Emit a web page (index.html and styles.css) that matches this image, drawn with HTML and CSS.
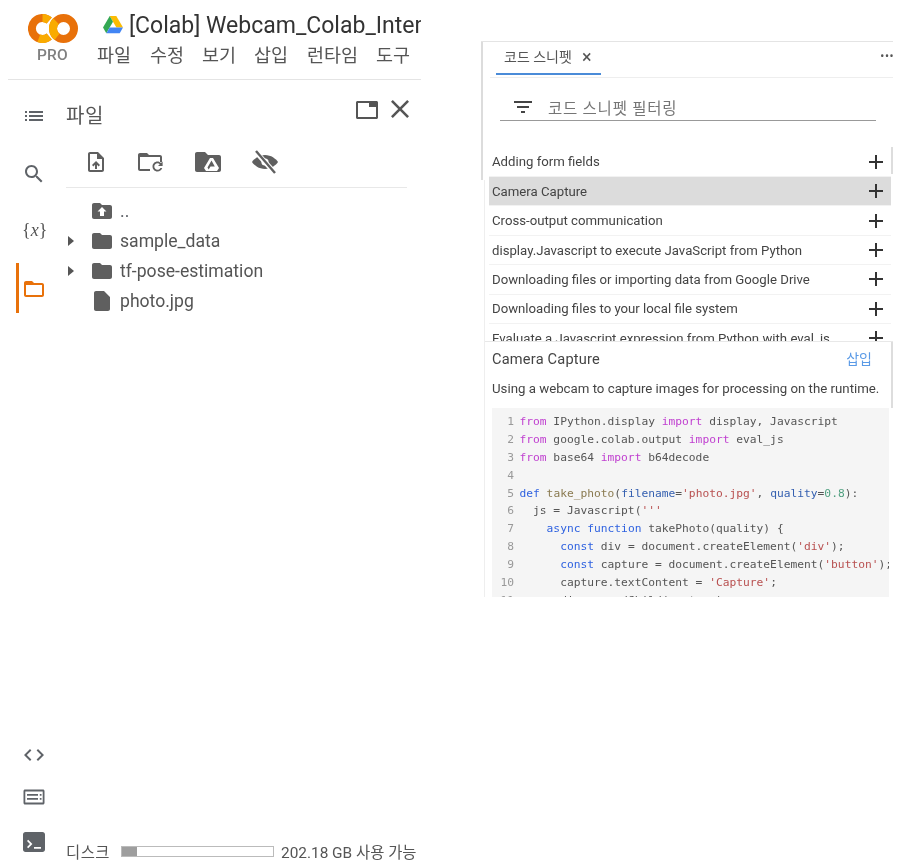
FILE: index.html
```html
<!DOCTYPE html>
<html lang="ko">
<head>
<meta charset="utf-8">
<title>Colab</title>
<link rel="stylesheet" href="styles.css">
</head>
<body>
<div class="canvas">
  <section class="left">
    <header class="header">
      <div class="logo">
        <svg class="logo-mark" viewBox="0 0 50 29" width="50" height="29">
          <g fill="none" stroke-width="8">
            <path d="M21.200 6.500A10.500 10.500 0 1 0 21.200 22.500" stroke="#e8710a"/>
            <path d="M10.800 24.300A10.500 10.500 0 0 0 21.200 22.500M14.500 4A10.500 10.500 0 0 1 21.200 6.500" stroke="#f9ab00"/>
            <circle cx="35.500" cy="14.500" r="10.500" stroke="#e8710a"/>
            <path d="M29 22.800A10.500 10.500 0 0 1 28 7.100" stroke="#f9ab00"/>
          </g>
        </svg>
        <span class="pro">PRO</span>
      </div>
      <div class="head-main">
        <div class="title-row">
          <svg class="drive" viewBox="0 0 20 18" width="20" height="18">
            <path d="M6.700 0h6.600l6.700 11.500h-6.600z" fill="#fbbc04"/>
            <path d="M6.700 0L0 11.500l3.300 5.700L10 5.700z" fill="#34a853"/>
            <path d="M3.300 17.200h13.400l3.300-5.700H6.700z" fill="#4285f4"/>
          </svg>
          <span class="title">[Colab] Webcam_Colab_Inter</span>
        </div>
        <nav class="menu">
          <span>파일</span><span>수정</span><span>보기</span><span>삽입</span><span>런타임</span><span>도구</span>
        </nav>
      </div>
    </header>
    <div class="workspace">
      <aside class="rail">
        <div class="rail-item"><svg viewBox="0 0 24 24" class="icon"><path d="M3 13h2v-2H3v2zm0 4h2v-2H3v2zm0-8h2V7H3v2zm4 4h14v-2H7v2zm0 4h14v-2H7v2zM7 7v2h14V7H7z"/></svg></div>
        <div class="rail-item"><svg viewBox="0 0 24 24" class="icon"><path d="M15.500 14h-.79l-.28-.27C15.410 12.590 16 11.110 16 9.500 16 5.910 13.090 3 9.500 3S3 5.910 3 9.500 5.910 16 9.500 16c1.610 0 3.090-.59 4.230-1.570l.27.28v.79l5 4.990L20.490 19l-4.990-5zm-6 0C7.010 14 5 11.990 5 9.500S7.010 5 9.500 5 14 7.010 14 9.500 11.990 14 9.500 14z"/></svg></div>
        <div class="rail-item vars"><span class="var-glyph">{<i>x</i>}</span></div>
        <div class="rail-item active"><svg viewBox="0 0 24 24" class="icon orange"><path d="M20 6h-8l-2-2H4c-1.100 0-1.990.9-1.990 2L2 18c0 1.100.9 2 2 2h16c1.100 0 2-.9 2-2V8c0-1.100-.9-2-2-2zm0 12H4V8h16v10z"/></svg></div>
        <div class="rail-bottom">
          <svg viewBox="0 0 24 24" class="icon"><path d="M9.400 16.600L4.800 12l4.600-4.600L8 6l-6 6 6 6 1.400-1.400zm5.200 0l4.600-4.600-4.600-4.600L16 6l6 6-6 6-1.400-1.400z"/></svg>
          <svg viewBox="0 0 24 24" class="icon"><path fill-rule="evenodd" d="M3 4.500h18c.8 0 1.500.7 1.500 1.500v12c0 .8-.7 1.500-1.500 1.500H3c-.8 0-1.500-.7-1.500-1.500V6c0-.8.7-1.500 1.500-1.500zm.3 2v11h17.400v-11H3.300zM5 9h11v1.700H5V9zm12.800 0h1.700v1.700h-1.700V9zM5 13h11v1.700H5V13zm12.800 0h1.700v1.700h-1.700V13z"/></svg>
          <svg viewBox="0 0 24 24" class="icon term"><path fill-rule="evenodd" d="M3.500 2h17C21.900 2 23 3.100 23 4.500v15c0 1.400-1.100 2.500-2.500 2.500h-17C2.100 22 1 20.900 1 19.500v-15C1 3.100 2.100 2 3.500 2zM5 11l1.200-1.200L10.400 14l-4.200 4.200L5 17l3-3-3-3zm7 6h7v1.700h-7V17z"/></svg>
        </div>
      </aside>
      <main class="panel">
        <div class="panel-head">
          <span class="panel-title">파일</span>
          <div class="panel-actions">
            <svg class="win" viewBox="0 0 24 20" width="24" height="20"><path d="M2.500 1h19c.8 0 1.500.7 1.500 1.500v15c0 .8-.7 1.500-1.500 1.500h-19c-.8 0-1.500-.7-1.500-1.500v-15C1 1.700 1.700 1 2.500 1zM3 3v14h18V7h-7V3H3z"/></svg>
            <svg class="close" viewBox="5 5 14 14" width="18" height="18"><path d="M19 6.410L17.590 5 12 10.590 6.410 5 5 6.410 10.590 12 5 17.590 6.410 19 12 13.410 17.590 19 19 17.590 13.410 12z"/></svg>
          </div>
        </div>
        <div class="toolbar">
          <svg viewBox="0 0 24 24" class="tool"><path d="M14 2H6c-1.100 0-1.990.9-1.990 2L4 20c0 1.100.89 2 1.990 2H18c1.100 0 2-.9 2-2V8l-6-6zm4 18H6V4h7v5h5v11zM8 15.010l1.410 1.410L11 14.840V19h2v-4.160l1.590 1.590L16 15.010 12.010 11 8 15.010z"/></svg>
          <svg viewBox="0 0 28 24" class="tool wide"><path d="M3 3h7l2 2h11c1.100 0 2 .9 2 2v5h-2V7H3v12h10v2H3c-1.100 0-2-.9-2-2V5c0-1.100.9-2 2-2z"/><path d="M20.500 11.500c1.400 0 2.600.6 3.500 1.500l1.600-1.600V16h-4.600l1.800-1.800c-.6-.6-1.400-1-2.300-1-1.800 0-3.200 1.400-3.200 3.300s1.400 3.300 3.200 3.300c1.300 0 2.400-.8 2.900-1.900h1.800c-.6 2.100-2.500 3.600-4.700 3.600-2.800 0-5-2.200-5-5s2.200-5 5-5z"/></svg>
          <svg viewBox="0 0 28 24" class="tool wide"><path fill-rule="evenodd" d="M3 2h8l3 3h11c1.100 0 2 .9 2 2v13c0 1.100-.9 2-2 2H3c-1.100 0-2-.9-2-2V4c0-1.100.9-2 2-2zm13 6l-6 10 2 3h11l2-3-6-10h-3zm1.500 2.500l3.300 6h-4.300l-1.800 3-1.200-2 4-7z"/></svg>
          <svg viewBox="0 0 28 24" class="tool wide"><path d="M14 5c-6 0-11 3.800-13 7 2 3.200 7 7 13 7s11-3.800 13-7c-2-3.200-7-7-13-7z"/><circle cx="14" cy="12" r="3.600" fill="#fff"/><path d="M4.500 1.500L23.500 22.500" stroke="#fff" stroke-width="5"/><path d="M5 1L24 23" stroke="#5f5f5f" stroke-width="2.400"/></svg>
        </div>
        <div class="tree">
          <div class="tree-row"><span class="caret"></span><svg viewBox="0 0 24 24" class="node"><path fill-rule="evenodd" d="M10 4H4c-1.100 0-1.990.9-1.990 2L2 18c0 1.100.9 2 2 2h16c1.100 0 2-.9 2-2V8c0-1.100-.9-2-2-2h-8l-2-2zm2 4l4.500 4.500H14V17h-4v-4.500H7.500L12 8z"/></svg><span class="dots">..</span></div>
          <div class="tree-row"><span class="caret on"></span><svg viewBox="0 0 24 24" class="node"><path d="M10 4H4c-1.100 0-1.990.9-1.990 2L2 18c0 1.100.9 2 2 2h16c1.100 0 2-.9 2-2V8c0-1.100-.9-2-2-2h-8l-2-2z"/></svg><span>sample_data</span></div>
          <div class="tree-row"><span class="caret on"></span><svg viewBox="0 0 24 24" class="node"><path d="M10 4H4c-1.100 0-1.990.9-1.990 2L2 18c0 1.100.9 2 2 2h16c1.100 0 2-.9 2-2V8c0-1.100-.9-2-2-2h-8l-2-2z"/></svg><span>tf-pose-estimation</span></div>
          <div class="tree-row"><span class="caret"></span><svg viewBox="0 0 24 24" class="node"><path d="M6 2c-1.100 0-1.990.9-1.990 2L4 20c0 1.100.89 2 1.990 2H18c1.100 0 2-.9 2-2V8l-6-6H6z"/></svg><span>photo.jpg</span></div>
        </div>
        <div class="disk">
          <span class="disk-label">디스크</span>
          <div class="disk-bar"><div class="disk-fill"></div></div>
          <span class="disk-text">202.18 GB 사용 가능</span>
        </div>
      </main>
    </div>
  </section>

  <section class="right">
    <div class="tabs">
      <div class="tab"><span>코드 스니펫</span><span class="tab-x">×</span></div>
      <span class="more">•••</span>
    </div>
    <div class="filter">
      <svg viewBox="3 6 18 12" width="18" height="12" class="filter-icon"><path d="M10 18h4v-2h-4v2zM3 6v2h18V6H3zm3 7h12v-2H6v2z"/></svg>
      <span>코드 스니펫 필터링</span>
    </div>
    <div class="list-wrap">
      <ul class="list">
        <li><span>Adding form fields</span><svg viewBox="5 5 14 14" class="plus"><path d="M19 13h-6v6h-2v-6H5v-2h6V5h2v6h6v2z"/></svg></li>
        <li class="sel"><span>Camera Capture</span><svg viewBox="5 5 14 14" class="plus"><path d="M19 13h-6v6h-2v-6H5v-2h6V5h2v6h6v2z"/></svg></li>
        <li><span>Cross-output communication</span><svg viewBox="5 5 14 14" class="plus"><path d="M19 13h-6v6h-2v-6H5v-2h6V5h2v6h6v2z"/></svg></li>
        <li><span>display.Javascript to execute JavaScript from Python</span><svg viewBox="5 5 14 14" class="plus"><path d="M19 13h-6v6h-2v-6H5v-2h6V5h2v6h6v2z"/></svg></li>
        <li><span>Downloading files or importing data from Google Drive</span><svg viewBox="5 5 14 14" class="plus"><path d="M19 13h-6v6h-2v-6H5v-2h6V5h2v6h6v2z"/></svg></li>
        <li><span>Downloading files to your local file system</span><svg viewBox="5 5 14 14" class="plus"><path d="M19 13h-6v6h-2v-6H5v-2h6V5h2v6h6v2z"/></svg></li>
        <li><span>Evaluate a Javascript expression from Python with eval_js</span><svg viewBox="5 5 14 14" class="plus"><path d="M19 13h-6v6h-2v-6H5v-2h6V5h2v6h6v2z"/></svg></li>
      </ul>
      <div class="scroll-thumb"></div>
    </div>
    <div class="detail">
      <div class="detail-top">
        <div class="detail-head"><span class="detail-title">Camera Capture</span><span class="insert">삽입</span></div>
        <p class="detail-desc">Using a webcam to capture images for processing on the runtime.</p>
      </div>
      <div class="code">
<div class="ln"><b>1</b><code><span class="k">from</span> IPython.display <span class="k">import</span> display, Javascript</code></div>
<div class="ln"><b>2</b><code><span class="k">from</span> google.colab.output <span class="k">import</span> eval_js</code></div>
<div class="ln"><b>3</b><code><span class="k">from</span> base64 <span class="k">import</span> b64decode</code></div>
<div class="ln"><b>4</b><code></code></div>
<div class="ln"><b>5</b><code><span class="d">def</span> <span class="f">take_photo</span>(<span class="p">filename</span>=<span class="s">'photo.jpg'</span>, <span class="p">quality</span>=<span class="n">0.8</span>):</code></div>
<div class="ln"><b>6</b><code>  js = Javascript(<span class="s">'''</span></code></div>
<div class="ln"><b>7</b><code>    <span class="d">async</span> <span class="d">function</span> takePhoto(quality) {</code></div>
<div class="ln"><b>8</b><code>      <span class="d">const</span> div = document.createElement(<span class="s">'div'</span>);</code></div>
<div class="ln"><b>9</b><code>      <span class="d">const</span> capture = document.createElement(<span class="s">'button'</span>);</code></div>
<div class="ln"><b>10</b><code>      capture.textContent = <span class="s">'Capture'</span>;</code></div>
<div class="ln"><b>11</b><code>      div.appendChild(capture);</code></div>
      </div>
    </div>
  </section>
</div>
</body>
</html>
```

FILE: styles.css
```css
* { box-sizing: border-box; }
html, body { margin: 0; padding: 0; background: #fff; }
.canvas {
  width: 916px; height: 866px; display: flex; overflow: hidden; background: #fff;
  font-family: Roboto, "Noto Sans CJK KR", sans-serif; color: #444;
  filter: blur(0.45px);
}

/* left window */
.left { width: 413px; margin-left: 8px; height: 866px; display: flex; flex-direction: column; }
.header { height: 80px; flex: none; border-bottom: 1px solid #e4e4e4; display: flex; }
.logo { width: 89px; padding-top: 14px; display: flex; flex-direction: column; align-items: center; flex: none; }
.logo-mark { display: block; }
.pro { font-size: 15.500px; font-weight: 500; line-height: 16px; color: #808080; margin-top: 4px; letter-spacing: .3px; }
.head-main { min-width: 0; flex: 1; overflow: hidden; }
.title-row { display: flex; align-items: center; height: 30px; margin-top: 11px; padding-left: 6px; white-space: nowrap; }
.drive { flex: none; margin-right: 6px; margin-top: -2px; }
.title { font-size: 23px; color: #333; line-height: 30px; }
.menu { display: flex; margin-top: 2px; font-size: 18.500px; line-height: 26px; color: #555; white-space: nowrap; }
.menu span:nth-child(1) { width: 53px; }
.menu span:nth-child(2) { width: 52px; }
.menu span:nth-child(3) { width: 52px; }
.menu span:nth-child(4) { width: 53px; }
.menu span:nth-child(5) { width: 69px; }

.workspace { flex: 1; min-height: 0; display: flex; }
.rail { width: 58px; flex: none; display: flex; flex-direction: column; padding: 11px 0 12px; }
.icon { width: 24px; height: 24px; fill: #5f6368; display: block; }
.icon.orange { fill: #e8710a; margin-top: 2px; }
.rail-item { height: 50px; margin-bottom: 8px; display: flex; align-items: center; padding-left: 14px; }
.rail-item.vars { margin-top: -2px; }
.rail-item.active { margin-left: 8px; border-left: 3px solid #e8710a; padding-left: 3px; }
.var-glyph { font-family: "Liberation Serif", serif; font-size: 18px; color: #555; width: 24px; text-align: center; }
.rail-bottom { margin-top: auto; padding-left: 14px; display: flex; flex-direction: column; gap: 18px; }
.rail-bottom .term { margin-top: 3px; }

.panel { flex: 1; min-width: 0; display: flex; flex-direction: column; }
.panel-head { height: 52px; flex: none; display: flex; justify-content: space-between; padding: 12px 12px 0 0; }
.panel-title { font-size: 20px; line-height: 48px; color: #555; letter-spacing: .5px; }
.panel-actions { display: flex; gap: 12px; align-items: flex-start; padding-top: 8px; }
.win, .close { fill: #555; display: block; }
.toolbar { width: 341px; height: 56px; flex: none; border-bottom: 1px solid #e8e8e8; display: flex; gap: 29px; padding: 0 0 0 18px; }
.tool { width: 24px; height: 24px; fill: #5f5f5f; margin-top: 18px; }
.tool.wide { width: 28px; }
.tree { padding-top: 8px; }
.tree-row { height: 30px; display: flex; align-items: center; font-size: 17.600px; color: #555; }
.caret { width: 24px; flex: none; display: flex; padding-left: 2px; }
.caret.on::before { content: ""; border-left: 6px solid #555; border-top: 5px solid transparent; border-bottom: 5px solid transparent; }
.node { width: 24px; height: 24px; fill: #5f5f5f; margin-right: 6px; flex: none; }
.dots { color: #5f6368; }
.disk { margin-top: auto; height: 20px; margin-bottom: 5px; display: flex; align-items: center; font-size: 15.400px; color: #555; white-space: nowrap; }
.disk-label { width: 55px; flex: none; letter-spacing: .5px; }
.disk-bar { width: 153px; height: 11px; border: 1px solid #bbb; flex: none; margin-right: 7px; }
.disk-fill { width: 15px; height: 100%; background: #9e9e9e; }

/* right window */
.right { width: 412px; margin-left: 60px; margin-top: 41px; height: 556px; border-top: 1px solid #e4e4e4; position: relative; overflow: hidden; padding-left: 3px; }
.right::before { content: ""; position: absolute; left: 0; top: 0; width: 2px; height: 138px; background: #dcdcdc; }
.right::after { content: ""; position: absolute; left: 3px; top: 138px; bottom: 0; width: 1px; background: #eee; }
.tabs { height: 36px; border-bottom: 1px solid #eee; margin-left: 6px; display: flex; justify-content: space-between; }
.tab { width: 105px; height: 33px; margin-left: 6px; border-bottom: 2px solid #4a8bd8; padding: 6px 0 0 8px; font-size: 14px; line-height: 18px; color: #555; display: flex; gap: 10px; white-space: nowrap; }
.tab-x { font-size: 18px; color: #555; }
.more { font-size: 12px; line-height: 28px; color: #555; letter-spacing: .5px; margin-right: -1px; }
.filter { margin: 18px 0 0 16px; width: 376px; height: 25px; border-bottom: 1px solid #999; display: flex; align-items: center; gap: 16px; padding: 0 0 2px 14px; font-size: 15.500px; color: #757575; letter-spacing: .75px; }
.filter-icon { fill: #444; }
.list-wrap { margin-top: 26px; height: 194px; position: relative; overflow: hidden; }
.list { list-style: none; margin: 0 0 0 5px; padding: .7px 0 0; width: 402px; }
.list li { height: 29.400px; display: flex; align-items: center; justify-content: space-between; padding: 0 8px 0 3px; border-bottom: 1px solid #f2f2f2; font-size: 13.200px; color: #444; white-space: nowrap; }
.list li.sel { background: #dcdcdc; }
.plus { width: 14px; height: 14px; fill: #333; flex: none; }
.scroll-thumb { position: absolute; left: 407px; top: 0; width: 2px; height: 27px; background: #ddd; }
.detail { border-top: 1px solid #e8e8e8; background: #fff; }
.detail-top { height: 66px; border-right: 2px solid #ddd; }
.detail-head { display: flex; justify-content: space-between; padding: 0 19px 0 8px; height: 33px; align-items: center; }
.detail-title { font-size: 14.600px; color: #444; letter-spacing: .2px; }
.insert { font-size: 14px; color: #5a9ae6; margin-top: -2px; }
.detail-desc { margin: 4px 0 0 8px; font-size: 13.250px; line-height: 20px; color: #444; white-space: nowrap; }
.code { margin-left: 8px; width: 397px; height: 190px; background: #f5f5f5; padding-top: 5px; overflow: hidden; font-family: "DejaVu Sans Mono", monospace; font-size: 11.260px; line-height: 17.900px; color: #555; }
.ln { display: flex; height: 17.900px; white-space: pre; }
.ln b { width: 22px; flex: none; text-align: right; font-weight: 400; color: #999; margin-right: 5.500px; }
.ln code { font: inherit; }
.k { color: #c040d0; }
.d { color: #2f62e0; }
.f { color: #8a7a50; }
.p { color: #3560b0; }
.s { color: #b85050; }
.n { color: #50a080; }
```
